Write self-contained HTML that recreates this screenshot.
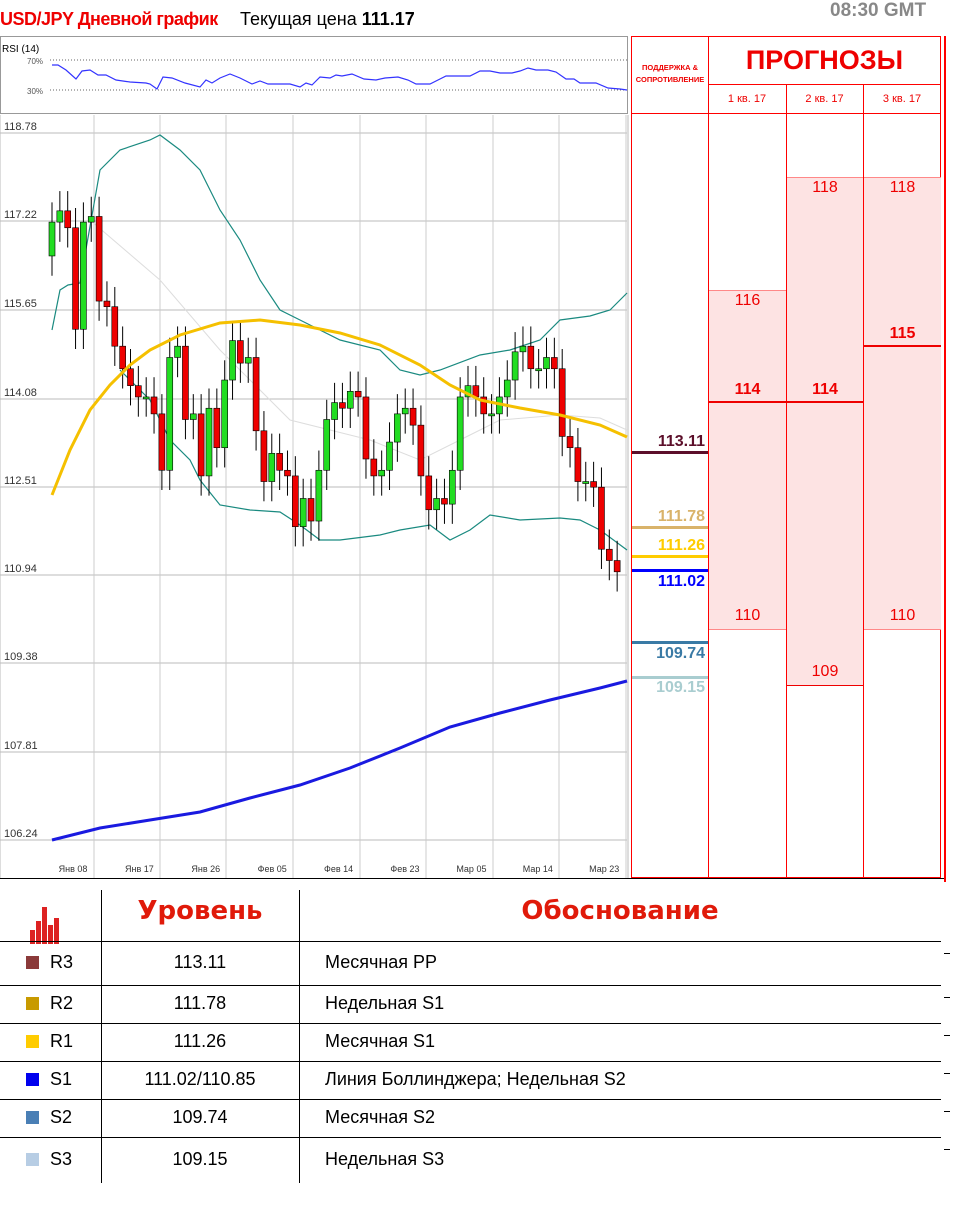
<!DOCTYPE html>
<html><head><meta charset="utf-8"><style>
body{margin:0;width:954px;height:1207px;background:#fff;position:relative;overflow:hidden;font-family:"Liberation Sans",sans-serif}
.a{position:absolute}
.t{font-family:"Liberation Sans Narrow","Liberation Sans",sans-serif}
</style></head><body>
<div class="a t" style="left:0;top:9px;font-size:18px;color:#e00;font-weight:bold;letter-spacing:-0.5px">USD/JPY Дневной график</div>
<div class="a t" style="left:240px;top:9px;font-size:18px;color:#000">Текущая цена <b>111.17</b></div>
<div class="a" style="left:830px;top:0;font-size:19px;color:#888;font-weight:bold">08:30 GMT</div>

<svg class="a" style="left:0;top:0" width="954" height="1207" id="s">
<rect x="0.5" y="36.5" width="627" height="77" fill="none" stroke="#999"/>
<text x="2" y="52" font-size="10" font-family="Liberation Sans">RSI (14)</text>
<text x="27" y="64" font-size="8" fill="#555">70%</text>
<text x="27" y="94" font-size="8" fill="#555">30%</text>
<line x1="50" y1="60" x2="627" y2="60" stroke="#666" stroke-dasharray="1,2"/>
<line x1="50" y1="90" x2="627" y2="90" stroke="#666" stroke-dasharray="1,2"/>
<polyline fill="none" stroke="#33f" stroke-width="1.2" points="52,65 58,65 66,70 76,79 82,71 90,70 98,75 106,75 116,80 130,82 146,83 150,84 157,89 163,77 172,78 185,83 200,87 206,80 212,83 220,78 230,74 240,78 252,84 260,81 268,84 290,84 300,87 306,83 312,85 320,77 330,78 336,75 342,76 352,74 364,79 376,80 385,78 398,77 408,80 416,84 430,84 440,79 446,76 470,76 480,71 490,71 500,73 512,73 520,71 528,68 536,70 548,70 556,72 566,79 574,79 580,83 596,83 608,88 620,89 627,90"/>
<g id="chart"></g>
</svg>

<!-- right panel -->
<div class="a" style="left:631px;top:36px;width:310px;height:842px;border:1px solid #f00;border-left:1px solid #f00;box-sizing:border-box"></div>
<div class="a" style="left:944px;top:36px;width:2px;height:846px;background:#f00"></div>
<div class="a" style="left:708px;top:36px;width:1px;height:842px;background:#f00"></div>
<div class="a" style="left:786px;top:84px;width:1px;height:794px;background:#f00"></div>
<div class="a" style="left:863px;top:84px;width:1px;height:794px;background:#f00"></div>
<div class="a" style="left:708px;top:84px;width:233px;height:1px;background:#f00"></div>
<div class="a" style="left:631px;top:113px;width:310px;height:1px;background:#f00"></div>
<div class="a t" style="left:632px;top:62px;width:76px;text-align:center;font-size:7.5px;color:#e00;font-weight:bold;line-height:12px">ПОДДЕРЖКА &amp;<br>СОПРОТИВЛЕНИЕ</div>
<div class="a t" style="left:708px;top:45px;width:233px;text-align:center;font-size:27px;color:#e00;font-weight:bold">ПРОГНОЗЫ</div>
<div class="a t" style="left:708px;top:93px;width:78px;text-align:center;font-size:11px;color:#e00">1 кв. 17</div>
<div class="a t" style="left:786px;top:93px;width:77px;text-align:center;font-size:11px;color:#e00">2 кв. 17</div>
<div class="a t" style="left:863px;top:93px;width:78px;text-align:center;font-size:11px;color:#e00">3 кв. 17</div>

<div class="a" style="left:709px;top:290px;width:77px;height:338px;background:#fde3e3;border-top:1px solid #f88;border-bottom:1px solid #f88"></div>
<div class="a" style="left:787px;top:177px;width:76px;height:507px;background:#fde3e3;border-top:1px solid #f88;border-bottom:1px solid #e00"></div>
<div class="a" style="left:864px;top:177px;width:77px;height:451px;background:#fde3e3;border-top:1px solid #f88;border-bottom:1px solid #f88"></div>
<div class="a" style="left:709px;top:401px;width:154px;height:2px;background:#e00"></div>
<div class="a" style="left:864px;top:345px;width:77px;height:2px;background:#e00"></div>
<div class="a" style="left:709px;top:292px;width:77px;text-align:center;font-size:16px;color:#e00">116</div>
<div class="a" style="left:709px;top:381px;width:77px;text-align:center;font-size:16px;color:#e00;font-weight:bold">114</div>
<div class="a" style="left:709px;top:607px;width:77px;text-align:center;font-size:16px;color:#e00">110</div>
<div class="a" style="left:787px;top:179px;width:76px;text-align:center;font-size:16px;color:#e00">118</div>
<div class="a" style="left:787px;top:381px;width:76px;text-align:center;font-size:16px;color:#e00;font-weight:bold">114</div>
<div class="a" style="left:787px;top:663px;width:76px;text-align:center;font-size:16px;color:#e00">109</div>
<div class="a" style="left:864px;top:179px;width:77px;text-align:center;font-size:16px;color:#e00">118</div>
<div class="a" style="left:864px;top:325px;width:77px;text-align:center;font-size:16px;color:#e00;font-weight:bold">115</div>
<div class="a" style="left:864px;top:607px;width:77px;text-align:center;font-size:16px;color:#e00">110</div>

<div class="a" style="left:632px;top:451px;width:76px;height:3px;background:#5c0f2a"></div>
<div class="a" style="left:632px;top:526px;width:76px;height:3px;background:#d9b36a"></div>
<div class="a" style="left:632px;top:555px;width:76px;height:3px;background:#fc0"></div>
<div class="a" style="left:632px;top:569px;width:76px;height:3px;background:#00f"></div>
<div class="a" style="left:632px;top:641px;width:76px;height:3px;background:#3a7aa5"></div>
<div class="a" style="left:632px;top:676px;width:76px;height:3px;background:#a9cdd0"></div>
<div class="a" style="left:632px;top:433px;width:73px;text-align:right;font-size:16px;font-weight:bold;color:#5c0f2a">113.11</div>
<div class="a" style="left:632px;top:508px;width:73px;text-align:right;font-size:16px;font-weight:bold;color:#d9b36a">111.78</div>
<div class="a" style="left:632px;top:537px;width:73px;text-align:right;font-size:16px;font-weight:bold;color:#fc0">111.26</div>
<div class="a" style="left:632px;top:573px;width:73px;text-align:right;font-size:16px;font-weight:bold;color:#00f">111.02</div>
<div class="a" style="left:632px;top:645px;width:73px;text-align:right;font-size:16px;font-weight:bold;color:#3a7aa5">109.74</div>
<div class="a" style="left:632px;top:679px;width:73px;text-align:right;font-size:16px;font-weight:bold;color:#a9cdd0">109.15</div>

<!-- table -->
<div class="a" style="left:0;top:878px;width:944px;height:1px;background:#000"></div>
<div class="a" style="left:101px;top:890px;width:1px;height:293px;background:#000"></div>
<div class="a" style="left:299px;top:890px;width:1px;height:293px;background:#000"></div>
<svg class="a" style="left:28px;top:905px" width="40" height="40"><g fill="#d22"><rect x="2" y="25" width="5" height="14"/><rect x="8" y="16" width="5" height="23"/><rect x="14" y="2" width="5" height="37"/><rect x="20" y="20" width="5" height="19"/><rect x="26" y="13" width="5" height="26"/></g></svg>
<div class="a" style="left:101px;top:896px;width:198px;text-align:center;font-size:26px;font-weight:bold;color:#e01a0a;font-family:'DejaVu Sans',sans-serif">Уровень</div>
<div class="a" style="left:299px;top:896px;width:642px;text-align:center;font-size:26px;font-weight:bold;color:#e01a0a;font-family:'DejaVu Sans',sans-serif">Обоснование</div>
<div id="rows"></div>

<script>
var Y=function(p){return 133+(118.78-p)*56.4};
var g='';
var hl=[[133,'118.78'],[221,'117.22'],[310,'115.65'],[399,'114.08'],[487,'112.51'],[575,'110.94'],[663,'109.38'],[752,'107.81'],[840,'106.24']];
hl.forEach(function(h){g+='<line x1="0" y1="'+h[0]+'" x2="627" y2="'+h[0]+'" stroke="#bbb"/><text x="4" y="'+(h[0]-3)+'" font-size="11" fill="#333" font-family="Liberation Sans">'+h[1]+'</text>';});
[94,160,226,293,360,426,493,559,626].forEach(function(x){g+='<line x1="'+x+'" y1="115" x2="'+x+'" y2="878" stroke="#ccc"/>';});
g+='<line x1="0" y1="115" x2="0" y2="878" stroke="#bbb"/><line x1="628" y1="115" x2="628" y2="878" stroke="#bbb"/>';
['Янв 08','Янв 17','Янв 26','Фев 05','Фев 14','Фев 23','Мар 05','Мар 14','Мар 23'].forEach(function(l,i){g+='<text x="'+(73+i*66.4)+'" y="872" font-size="9" text-anchor="middle" fill="#333">'+l+'</text>';});
function pl(pts,c,w){g+='<polyline fill="none" stroke="'+c+'" stroke-width="'+w+'" points="'+pts+'"/>';}
pl('90,220 160,280 220,350 290,420 330,430 370,440 420,460 460,440 500,420 560,415 600,418 627,430','#ddd',1);
pl('52,330 60,290 68,285 80,283 100,170 120,150 150,140 160,135 180,150 200,170 220,210 240,240 260,280 280,310 300,320 340,340 380,350 400,370 420,375 440,370 480,355 510,350 540,340 560,320 590,316 610,310 627,293','#1a8a80',1.2);
pl('120,370 150,400 170,440 190,460 200,480 220,505 250,510 280,512 300,525 320,540 340,540 380,535 400,530 430,525 450,540 470,530 490,515 520,520 560,518 580,520 600,530 627,550','#1a8a80',1.2);
var c=[116.6,117.2,117.4,117.1,115.3,117.2,117.3,115.8,115.7,115.0,114.6,114.3,114.1,114.1,113.8,112.8,114.8,115.0,113.7,113.8,112.7,113.9,113.2,114.4,115.1,114.7,114.8,113.5,112.6,113.1,112.8,112.7,111.8,112.3,111.9,112.8,113.7,114.0,113.9,114.2,114.1,113.0,112.7,112.8,113.3,113.8,113.9,113.6,112.7,112.1,112.3,112.2,112.8,114.1,114.3,114.1,113.8,113.8,114.1,114.4,114.9,115.0,114.6,114.6,114.8,114.6,113.4,113.2,112.6,112.6,112.5,111.4,111.2,111.0];
var n=c.length-1,dx=(625-52)/n;
for(var i=1;i<=n;i++){var x=52+(i-1)*dx,o=c[i-1],cl=c[i],hi=Math.max(o,cl)+0.35,lo=Math.min(o,cl)-0.35;
var col=cl>=o?'#2d2':'#e00';var t=Y(Math.max(o,cl)),b=Y(Math.min(o,cl));if(b-t<2)b=t+2;
g+='<line x1="'+x+'" y1="'+Y(hi)+'" x2="'+x+'" y2="'+Y(lo)+'" stroke="#000"/><rect x="'+(x-3)+'" y="'+t+'" width="6" height="'+(b-t)+'" fill="'+col+'" stroke="#000" stroke-width="0.6"/>';}
pl('52,495 70,450 90,410 110,385 130,365 150,350 180,335 220,323 260,320 300,325 340,333 380,345 420,365 450,385 480,400 520,408 560,415 600,425 627,437','#f5c000',3);
pl('52,840 100,828 150,820 200,812 250,798 300,785 350,768 400,748 450,727 500,713 550,700 600,688 627,681','#1a1ae0',3);
document.getElementById('chart').innerHTML=g;
var rows=[['#8b3a3a','R3','113.11','Месячная PP'],['#c89a00','R2','111.78','Недельная S1'],['#ffcc00','R1','111.26','Месячная S1'],['#0000ee','S1','111.02/110.85','Линия Боллинджера; Недельная S2'],['#4a7fb5','S2','109.74','Месячная S2'],['#b7cde4','S3','109.15','Недельная S3']];
var ys=[941,985,1023,1061,1099,1137,1183],h='';
for(var i=0;i<6;i++){var t=ys[i],m=(ys[i]+ys[i+1])/2;
h+='<div class="a" style="left:0;top:'+t+'px;width:941px;height:1px;background:#000"></div>';
h+='<div class="a" style="left:26px;top:'+(m-7)+'px;width:13px;height:13px;background:'+rows[i][0]+'"></div>';
h+='<div class="a" style="left:50px;top:'+(m-11)+'px;font-size:18px">'+rows[i][1]+'</div>';
h+='<div class="a" style="left:101px;top:'+(m-11)+'px;width:198px;text-align:center;font-size:18px">'+rows[i][2]+'</div>';
h+='<div class="a" style="left:325px;top:'+(m-11)+'px;font-size:18px">'+rows[i][3]+'</div>';
h+='<div class="a" style="left:944px;top:'+(t+12)+'px;width:6px;height:1px;background:#000"></div>';}
document.getElementById('rows').innerHTML=h;
</script>
</body></html>
